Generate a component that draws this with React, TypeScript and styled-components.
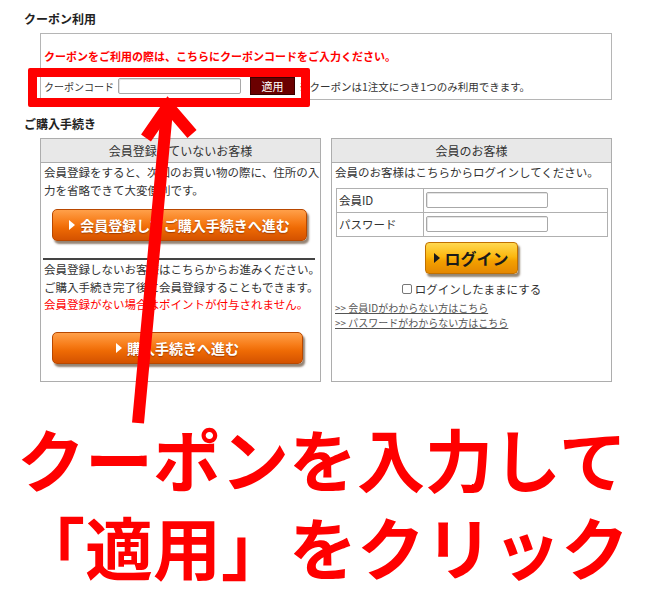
import React from 'react';
import styled, { createGlobalStyle } from 'styled-components';

const GlobalStyle = createGlobalStyle`
  body {
    margin: 0;
    background: #ffffff;
    font-family: "Noto Sans CJK JP", "Liberation Sans", sans-serif;
    color: #333333;
  }
`;

const Page = styled.div`
  position: relative;
  width: 650px;
  height: 600px;
  overflow: hidden;
`;

const Content = styled.div`
  padding: 11px 0 0 24px;
`;

const SectionTitle = styled.div<{ $gap?: number }>`
  margin-top: ${(p) => p.$gap || 0}px;
  font-size: 12px;
  font-weight: bold;
  line-height: 16px;
  color: #222;
`;

const CouponBox = styled.div`
  margin: 6px 0 0 16px;
  width: 572px;
  height: 67px;
  box-sizing: border-box;
  border: 1px solid #b5b5b5;
  padding: 13px 3px 0;
`;

const RedNotice = styled.div`
  color: #ff0000;
  font-size: 11px;
  font-weight: bold;
  line-height: 18px;
`;

const CouponRow = styled.div`
  display: flex;
  align-items: center;
  height: 18px;
  margin-top: 12px;
  font-size: 10px;
  color: #333;
  white-space: nowrap;
`;

const TextInput = styled.div<{ $w: number; $gap?: number }>`
  width: ${(p) => p.$w}px;
  height: 14px;
  margin-left: ${(p) => p.$gap ?? 4}px;
  border: 1px solid #a8a8a8;
  border-radius: 2px;
  background: #fff;
  box-shadow: inset 1px 1px 0 #e4e4e4;
`;

const ApplyButton = styled.div`
  width: 43px;
  height: 16px;
  margin-left: 9px;
  background: #6b0000;
  border: 1px solid #3a0000;
  color: #fff;
  font-size: 11px;
  line-height: 16px;
  text-align: center;
`;

const Note = styled.span`
  margin-left: 4px;
  font-size: 10.5px;
`;

const Panels = styled.div`
  display: flex;
  gap: 10px;
  margin: 6px 0 0 16px;
`;

const Panel = styled.div`
  width: 281px;
  height: 244px;
  box-sizing: border-box;
  border: 1px solid #adadad;
`;

const PanelHeader = styled.div`
  height: 23px;
  border-bottom: 1px solid #adadad;
  background: #e8e8e8;
  text-align: center;
  font-size: 12px;
  line-height: 23px;
  color: #333;
`;

const PanelBody = styled.div`
  padding: 0 3px;
`;

const Text = styled.div<{ $red?: boolean; $top?: number }>`
  margin-top: ${(p) => p.$top || 0}px;
  font-size: 11.5px;
  line-height: 17.5px;
  color: ${(p) => (p.$red ? '#ff0000' : '#333')};
  white-space: nowrap;
`;

const OrangeButton = styled.div<{ $w: number; $top: number }>`
  display: flex;
  align-items: center;
  justify-content: center;
  gap: 5px;
  width: ${(p) => p.$w}px;
  height: 32px;
  margin: ${(p) => p.$top}px 0 0 8px;
  box-sizing: border-box;
  border: 1px solid #b84800;
  border-radius: 5px;
  background: linear-gradient(#ffa04a 0%, #f77c18 40%, #ee6a04 60%, #d45200 100%);
  box-shadow: 2px 3px 2px rgba(60, 30, 0, 0.55);
  color: #fff;
  font-size: 14px;
  font-weight: bold;
  text-shadow: 0 1px 1px rgba(120, 40, 0, 0.6);
`;

const Tri = styled.span<{ $size: number }>`
  display: inline-block;
  width: 0;
  height: 0;
  border-top: ${(p) => p.$size}px solid transparent;
  border-bottom: ${(p) => p.$size}px solid transparent;
  border-left: ${(p) => p.$size * 1.2}px solid currentColor;
`;

const Divider = styled.div`
  margin: 17px 2px 0 -1px;
  border-top: 2px solid #444;
`;

const LoginTable = styled.table`
  width: 272px;
  margin: 6px 0 0 1px;
  border-collapse: collapse;
  font-size: 11.5px;
  color: #333;

  td {
    height: 23px;
    border: 1px solid #b0b0b0;
    padding: 0 0 0 2px;
  }
  td:first-child {
    width: 84px;
  }
`;

const LoginButton = styled.div`
  display: flex;
  align-items: center;
  justify-content: center;
  gap: 4px;
  width: 93px;
  height: 32px;
  margin: 5px auto 0;
  box-sizing: border-box;
  border: 1px solid #c07000;
  border-radius: 4px;
  background: linear-gradient(#ffd850 0%, #fbb810 45%, #f3a000 60%, #e58800 100%);
  box-shadow: 2px 3px 2px rgba(60, 35, 0, 0.55);
  color: #1a1a1a;
  font-size: 16px;
  font-weight: bold;
`;

const KeepRow = styled.div`
  display: flex;
  align-items: center;
  justify-content: center;
  gap: 3px;
  margin-top: 7px;
  font-size: 11.5px;
  line-height: 16px;
  color: #333;
`;

const CheckBox = styled.span`
  width: 8px;
  height: 8px;
  border: 1px solid #777;
  border-radius: 2px;
  background: #fff;
`;

const HelpLink = styled.a<{ $top: number }>`
  display: block;
  margin-top: ${(p) => p.$top}px;
  font-size: 10px;
  line-height: 15px;
  color: #555;
  text-decoration: underline;
`;

const BigMessage = styled.div`
  margin-top: 32px;
  padding-left: 17px;
  color: #ff0000;
  font-size: 68px;
  font-weight: bold;
  line-height: 88px;
  white-space: nowrap;
`;

const RedFrame = styled.div`
  position: absolute;
  left: 28px;
  top: 68px;
  width: 282px;
  height: 39px;
  box-sizing: border-box;
  border: 9px solid #ff0000;
  border-radius: 2px;
`;

const ArrowLayer = styled.svg`
  position: absolute;
  left: 0;
  top: 0;
  pointer-events: none;
`;

const App: React.FC = () => {
  return (
    <Page>
      <GlobalStyle />
      <Content>
        <SectionTitle>クーポン利用</SectionTitle>
        <CouponBox>
          <RedNotice>クーポンをご利用の際は、こちらにクーポンコードをご入力ください。</RedNotice>
          <CouponRow>
            クーポンコード
            <TextInput $w={121} />
            <ApplyButton>適用</ApplyButton>
            <Note>※クーポンは1注文につき1つのみ利用できます。</Note>
          </CouponRow>
        </CouponBox>

        <SectionTitle $gap={16}>ご購入手続き</SectionTitle>
        <Panels>
          <Panel>
            <PanelHeader>会員登録していないお客様</PanelHeader>
            <PanelBody>
              <Text $top={1}>会員登録をすると、次回のお買い物の際に、住所の入</Text>
              <Text>力を省略できて大変便利です。</Text>
              <OrangeButton $w={255} $top={10}>
                <Tri $size={5} />
                会員登録してご購入手続きへ進む
              </OrangeButton>
              <Divider />
              <Text $top={1}>会員登録しないお客様はこちらからお進みください。</Text>
              <Text>ご購入手続き完了後に会員登録することもできます。</Text>
              <Text $red>会員登録がない場合はポイントが付与されません。</Text>
              <OrangeButton $w={251} $top={18}>
                <Tri $size={5} />
                購入手続きへ進む
              </OrangeButton>
            </PanelBody>
          </Panel>

          <Panel>
            <PanelHeader>会員のお客様</PanelHeader>
            <PanelBody>
              <Text $top={1}>会員のお客様はこちらからログインしてください。</Text>
              <LoginTable>
                <tbody>
                  <tr>
                    <td>会員ID</td>
                    <td>
                      <TextInput $w={120} $gap={0} />
                    </td>
                  </tr>
                  <tr>
                    <td>パスワード</td>
                    <td>
                      <TextInput $w={120} $gap={0} />
                    </td>
                  </tr>
                </tbody>
              </LoginTable>
              <LoginButton>
                <Tri $size={5} />
                ログイン
              </LoginButton>
              <KeepRow>
                <CheckBox />
                ログインしたままにする
              </KeepRow>
              <HelpLink $top={3}>&gt;&gt; 会員IDがわからない方はこちら</HelpLink>
              <HelpLink $top={0}>&gt;&gt; パスワードがわからない方はこちら</HelpLink>
            </PanelBody>
          </Panel>
        </Panels>
      </Content>

      <BigMessage>
        クーポンを入力して
        <br />
        「適用」をクリック
      </BigMessage>

      <RedFrame />
      <ArrowLayer width={650} height={600} viewBox="0 0 650 600">
        <line x1={167} y1={110} x2={138} y2={423} stroke="#ff0000" strokeWidth={12} />
        <polyline
          points="146,138 168,106 192,134"
          fill="none"
          stroke="#ff0000"
          strokeWidth={12}
          strokeLinejoin="miter"
        />
      </ArrowLayer>
    </Page>
  );
};

export default App;
